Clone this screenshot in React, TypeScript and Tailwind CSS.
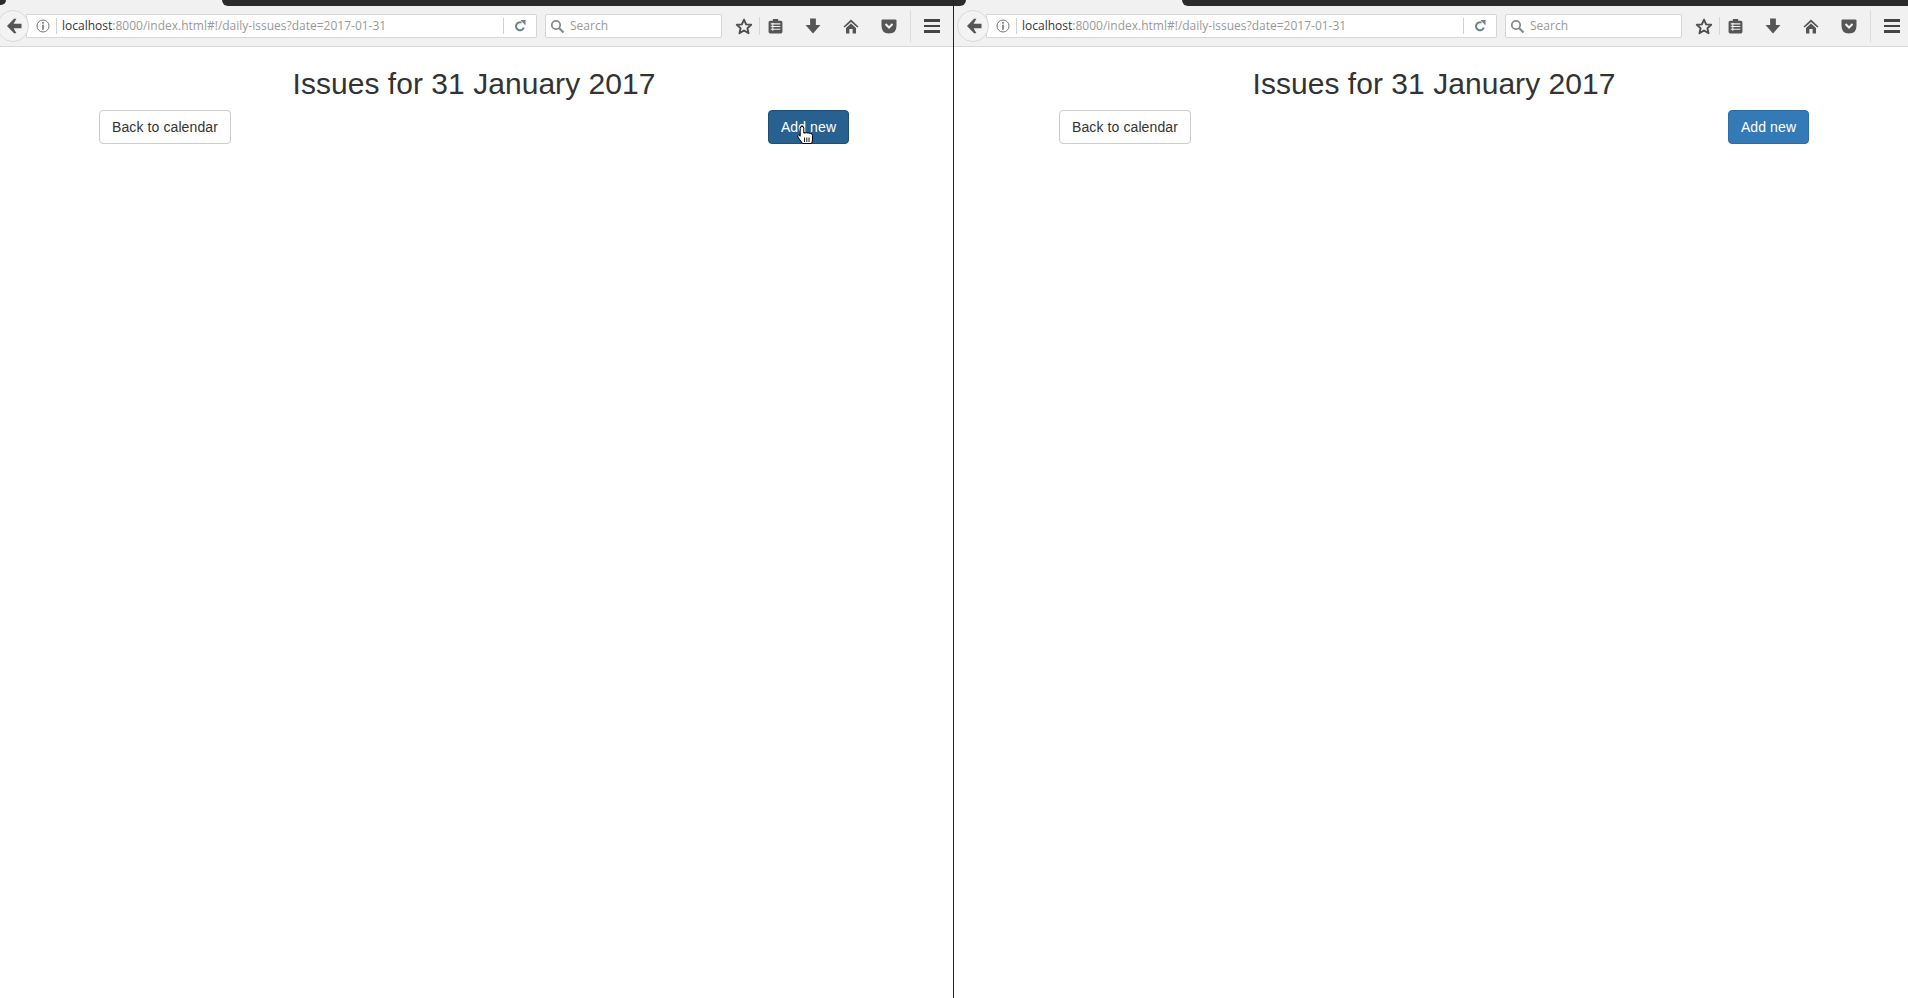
import React from "react"

const sans = { fontFamily: '"Liberation Sans", Arial, sans-serif' }

function BackIcon() {
  return (
    <svg width="16" height="16" viewBox="0 0 16 16">
      <path d="M8 0.8 L1 8 L8 15.2 L10.4 15.2 L7.6 10.2 H15.5 V5.8 H7.6 L10.4 0.8 Z" fill="#555" />
    </svg>
  )
}

function InfoIcon() {
  return (
    <svg width="14" height="14" viewBox="0 0 14 14">
      <circle cx="7" cy="7" r="6" fill="none" stroke="#777" strokeWidth="1" />
      <rect x="6.2" y="3" width="1.6" height="1.6" fill="#777" />
      <rect x="6.2" y="5.7" width="1.6" height="5" fill="#777" />
    </svg>
  )
}

function ReloadIcon() {
  return (
    <svg width="12" height="12" viewBox="0 0 12 12">
      <path d="M9.8 7.5 A4 4 0 1 1 7.6 2.6" fill="none" stroke="#6d7f90" strokeWidth="2" />
      <path d="M6.5 0 L11.5 0 L11.5 5.5 Z" fill="#6d7f90" />
    </svg>
  )
}

function SearchIcon() {
  return (
    <svg width="15" height="15" viewBox="0 0 15 15">
      <circle cx="6" cy="6" r="4.2" fill="none" stroke="#8a8a8a" strokeWidth="1.8" />
      <path d="M9 9 L13.5 13.5" stroke="#8a8a8a" strokeWidth="2.2" />
    </svg>
  )
}

function StarIcon() {
  return (
    <svg width="18" height="17" viewBox="0 0 17 16">
      <path d="M8.5 1.6 L10.5 6 L15.3 6.4 L11.7 9.6 L12.8 14.3 L8.5 11.8 L4.2 14.3 L5.3 9.6 L1.7 6.4 L6.5 6 Z" fill="none" stroke="#4f4f4f" strokeWidth="1.8" strokeLinejoin="round" />
    </svg>
  )
}

function ClipboardIcon() {
  return (
    <svg width="15" height="16" viewBox="0 0 14 15">
      <path d="M2 2.5 H4.5 V1 H9.5 V2.5 H12 Q13.5 2.5 13.5 4 V13 Q13.5 14.5 12 14.5 H2 Q0.5 14.5 0.5 13 V4 Q0.5 2.5 2 2.5 Z" fill="#555" />
      <path d="M2.5 5.5 H11.5 M2.5 8 H11.5 M2.5 10.5 H11.5" stroke="#f1f1f1" strokeWidth="1" />
      <path d="M4.5 4.5 V12" stroke="#f1f1f1" strokeWidth="1" />
    </svg>
  )
}

function DownloadIcon() {
  return (
    <svg width="16" height="16" viewBox="0 0 15 15">
      <path d="M4.8 0.5 H10.2 V6.5 H14.5 L7.5 14.5 L0.5 6.5 H4.8 Z" fill="#555" />
    </svg>
  )
}

function HomeIcon() {
  return (
    <svg width="16" height="15" viewBox="0 0 16 15">
      <path d="M8 0.5 L15.5 7.5 L14.3 8.6 L8 3 L1.7 8.6 L0.5 7.5 Z" fill="#555" />
      <path d="M8 4.5 L13 9 V14.5 H9.6 V10 H6.4 V14.5 H3 V9 Z" fill="#555" />
    </svg>
  )
}

function PocketIcon() {
  return (
    <svg width="16" height="15" viewBox="0 0 16 15">
      <path d="M1.5 0.5 H14.5 Q15.5 0.5 15.5 1.5 V6.5 Q15.5 14.5 8 14.5 Q0.5 14.5 0.5 6.5 V1.5 Q0.5 0.5 1.5 0.5 Z" fill="#555" />
      <path d="M4.5 5 L8 8.5 L11.5 5" fill="none" stroke="#f1f1f1" strokeWidth="2" />
    </svg>
  )
}

function MenuIcon() {
  return (
    <div className="flex w-4 flex-col gap-[3px]">
      <div className="h-[2.5px] bg-[#444]" />
      <div className="h-[2.5px] bg-[#444]" />
      <div className="h-[2.5px] bg-[#444]" />
    </div>
  )
}

function HandCursor() {
  return (
    <svg width="16" height="18" viewBox="0 0 16 18" className="absolute left-[28px] top-[15px]">
      <path d="M3.2 2.2 Q3.2 0.5 5 0.5 Q6.8 0.5 6.8 2.2 V7 H8.2 Q9.2 6.2 10.2 7 H11.2 Q12.2 6.6 13 7.5 H13.5 Q15.5 7.5 15.5 9.5 V13 Q15.5 15.5 14.5 17.5 H5.5 L0.9 11 Q0 9.2 1.6 9 L3.2 10.2 Z" fill="#fff" stroke="#000" strokeWidth="1" />
      <path d="M7.5 11.5 V16 M9.8 11.5 V16 M12 11.5 V16" stroke="#000" strokeWidth="0.9" />
    </svg>
  )
}

function BrowserWindow({ hovered, width }: { hovered?: boolean; width: string }) {
  return (
    <div className={`flex h-[998px] shrink-0 flex-col bg-white ${width}`}>
      {/* toolbar */}
      <div className="flex h-[47px] w-[960px] shrink-0 items-start border-b border-[#d8d8d8] bg-[#f1f1f1] pt-[14px]">
        <div className="relative z-10 -ml-[3px] -mt-[4px] flex h-[32px] w-[32px] shrink-0 items-center justify-center rounded-full border border-[#dadada] bg-[#f3f3f3] pl-[1px]">
          <BackIcon />
        </div>
        <div className="-ml-[3px] flex h-[24px] w-[511px] shrink-0 items-center rounded-r-[2px] border border-[#d6d6d6] bg-white">
          <div className="ml-[9px] flex w-[14px] items-center">
            <InfoIcon />
          </div>
          <div className="ml-[6px] h-[16px] w-px bg-[#d0d0d0]" />
          <div className="ml-[5px] w-[441px] text-[12px] text-[#999]" style={{ fontFamily: '"Open Sans", sans-serif' }}>
            <span className="text-[#333]">localhost</span>:8000/index.html#!/daily-issues?date=2017-01-31
          </div>
          <div className="h-[16px] w-px bg-[#d0d0d0]" />
          <div className="ml-[10px] flex items-center">
            <ReloadIcon />
          </div>
        </div>
        <div className="ml-[8px] flex h-[24px] w-[177px] shrink-0 items-center rounded-[2px] border border-[#d6d6d6] bg-white pl-[4px]">
          <SearchIcon />
          <span className="ml-[5px] text-[12px] text-[#999]" style={{ fontFamily: '"Open Sans", sans-serif' }}>Search</span>
        </div>
        <div className="flex h-[24px] w-[37px] shrink-0 items-center justify-center pl-[6px]"><StarIcon /></div>
        <div className="h-[18px] w-px translate-y-[3px] bg-[#d6d6d6]" />
        <div className="flex h-[24px] w-[30px] shrink-0 items-center justify-center"><ClipboardIcon /></div>
        <div className="ml-[4px] flex h-[24px] w-[38px] shrink-0 items-center justify-center"><DownloadIcon /></div>
        <div className="flex h-[24px] w-[38px] shrink-0 items-center justify-center"><HomeIcon /></div>
        <div className="flex h-[24px] w-[38px] shrink-0 items-center justify-center"><PocketIcon /></div>
        <div className="ml-[2px] h-[32px] w-px -translate-y-[4px] bg-[#dcdcdc]" />
        <div className="ml-[13px] flex h-[24px] items-center"><MenuIcon /></div>
      </div>
      {/* page */}
      <div className="ml-[99px] w-[750px]" style={sans}>
        <h2 className="mt-[20px] mb-[10px] text-center text-[30px] leading-[33px] tracking-[0.04px] text-[#333]">Issues for 31 January 2017</h2>
        <div className="flex justify-between">
          <button className="h-[34px] w-[132px] rounded-[4px] border border-[#ccc] bg-white text-[14px] tracking-[0.1px] text-[#333]">Back to calendar</button>
          <button className={`relative h-[34px] w-[81px] rounded-[4px] border text-[14px] tracking-[0.1px] text-white ${hovered ? "border-[#204d74] bg-[#286090]" : "border-[#2e6da4] bg-[#337ab7]"}`}>
            Add new
            {hovered && <HandCursor />}
          </button>
        </div>
      </div>
    </div>
  )
}

export default function App() {
  return (
    <div className="relative flex h-[998px] w-[1908px] overflow-hidden bg-white">
      <BrowserWindow hovered width="w-[960px]" />
      <BrowserWindow width="w-[948px]" />
      {/* dark tab strip edges along the top */}
      <div className="absolute left-0 top-0 h-[5px] w-[6px] rounded-br-[6px] bg-[#2b2b2b]" />
      <div className="absolute left-[222px] top-0 h-[6px] w-[744px] rounded-b-[7px] bg-[#2b2b2b]" />
      <div className="absolute left-[1182px] top-0 h-[6px] w-[726px] rounded-bl-[7px] bg-[#2b2b2b]" />
      {/* divider between the two windows */}
      <div className="absolute left-[953px] top-0 h-[998px] w-px bg-[#222]" />
    </div>
  )
}
